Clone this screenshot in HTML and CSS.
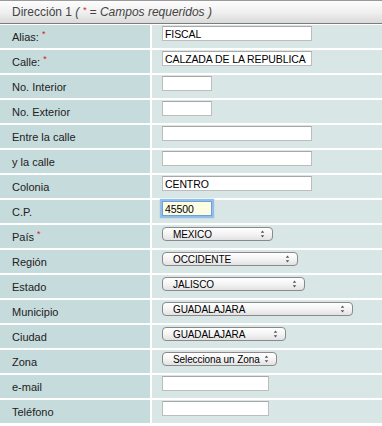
FILE: index.html
```html
<!DOCTYPE html>
<html lang="es">
<head>
    <meta charset="UTF-8">
    <meta name="viewport" content="width=device-width, initial-scale=1.0">
    <title>Dirección</title>
    <link rel="stylesheet" href="styles.css">
</head>
<body>

    <div class="box">
        <div class="box-head">Dirección 1 <em>( <span class="req">*</span> = Campos requeridos )</em></div>

        <div class="form">
            <div class="lbl">Alias: <span class="req">*</span></div>
            <div class="val"><input class="txt wide" type="text" value="FISCAL"></div>

            <div class="lbl">Calle: <span class="req">*</span></div>
            <div class="val"><input class="txt wide" type="text" value="CALZADA DE LA REPUBLICA"></div>

            <div class="lbl">No. Interior</div>
            <div class="val"><input class="txt short" type="text"></div>

            <div class="lbl">No. Exterior</div>
            <div class="val"><input class="txt short" type="text"></div>

            <div class="lbl">Entre la calle</div>
            <div class="val"><input class="txt wide" type="text"></div>

            <div class="lbl">y la calle</div>
            <div class="val"><input class="txt wide" type="text"></div>

            <div class="lbl">Colonia</div>
            <div class="val"><input class="txt wide" type="text" value="CENTRO"></div>

            <div class="lbl">C.P.</div>
            <div class="val"><input class="txt short focus" type="text" value="45500"></div>

            <div class="lbl">País <span class="req">*</span></div>
            <div class="val">
                <div class="sel" style="width: 111px;"><span>MEXICO</span><svg class="arr" viewBox="0 0 5 9"><path d="M2.5 0.5 L4.5 3 H0.5 Z M2.5 8.5 L4.5 6 H0.5 Z"/></svg></div>
            </div>

            <div class="lbl">Región</div>
            <div class="val">
                <div class="sel" style="width: 136px;"><span>OCCIDENTE</span><svg class="arr" viewBox="0 0 5 9"><path d="M2.5 0.5 L4.5 3 H0.5 Z M2.5 8.5 L4.5 6 H0.5 Z"/></svg></div>
            </div>

            <div class="lbl">Estado</div>
            <div class="val">
                <div class="sel" style="width: 143px;"><span>JALISCO</span><svg class="arr" viewBox="0 0 5 9"><path d="M2.5 0.5 L4.5 3 H0.5 Z M2.5 8.5 L4.5 6 H0.5 Z"/></svg></div>
            </div>

            <div class="lbl">Municipio</div>
            <div class="val">
                <div class="sel" style="width: 191px;"><span>GUADALAJARA</span><svg class="arr" viewBox="0 0 5 9"><path d="M2.5 0.5 L4.5 3 H0.5 Z M2.5 8.5 L4.5 6 H0.5 Z"/></svg></div>
            </div>

            <div class="lbl">Ciudad</div>
            <div class="val">
                <div class="sel" style="width: 124px;"><span>GUADALAJARA</span><svg class="arr" viewBox="0 0 5 9"><path d="M2.5 0.5 L4.5 3 H0.5 Z M2.5 8.5 L4.5 6 H0.5 Z"/></svg></div>
            </div>

            <div class="lbl">Zona</div>
            <div class="val">
                <div class="sel" style="width: 115px;"><span>Selecciona un Zona</span><svg class="arr" viewBox="0 0 5 9"><path d="M2.5 0.5 L4.5 3 H0.5 Z M2.5 8.5 L4.5 6 H0.5 Z"/></svg></div>
            </div>

            <div class="lbl">e-mail</div>
            <div class="val"><input class="txt mid" type="text"></div>

            <div class="lbl">Teléfono</div>
            <div class="val"><input class="txt mid" type="text"></div>
        </div>
    </div>

</body>
</html>
```

FILE: styles.css
```css
/* General Reset */
body {
    margin: 0;
    padding: 0;
    background-color: #fff;
    font-family: "Liberation Sans", Arial, Helvetica, sans-serif;
    color: #222;
}

.box {
    width: 382px;
}

/* Header */
.box-head {
    height: 22px;
    line-height: 22px;
    padding-left: 12px;
    font-size: 12px;
    color: #444;
    border-top: 1px solid #9a9a9a;
    border-bottom: 1px solid #7c7c7c;
    background: linear-gradient(to bottom, #fdfdfd 0%, #f0f0f0 50%, #dadada 100%);
}

.box-head em {
    font-style: italic;
}

.req {
    color: #e0121b;
    font-size: 9px;
    position: relative;
    top: -3px;
}

/* Form rows */
.form {
    display: grid;
    grid-template-columns: 150px 1fr;
    grid-auto-rows: 23px;
    column-gap: 2px;
    row-gap: 2px;
    margin-top: 1px;
}

.lbl {
    background-color: #c6dbdc;
    padding-left: 12px;
    font-size: 11px;
    display: flex;
    align-items: center;
    gap: 3px;
    padding-top: 1px;
}

.val {
    background-color: #d8e6e6;
    padding: 1px 0 0 10px;
    display: flex;
    align-items: flex-start;
}

/* Inputs */
.txt {
    box-sizing: border-box;
    height: 15px;
    margin: 0;
    padding: 0 2px;
    border: 1px solid #bdbdbd;
    border-top-color: #a8a8a8;
    background: #fff;
    font-family: "Liberation Sans", Arial, sans-serif;
    font-size: 10.5px;
    letter-spacing: -0.1px;
    color: #000;
    outline: none;
}

.wide { width: 150px; }
.short { width: 50px; }
.mid { width: 107px; }

.txt.focus {
    background: #fdfde4;
    border-color: #6e9fd6;
    box-shadow: 0 0 1px 2px #94bde9;
}

/* Select boxes */
.sel {
    box-sizing: border-box;
    height: 14px;
    margin-top: 1px;
    border: 1px solid #8a8a8a;
    border-radius: 4px;
    background: linear-gradient(to bottom, #ffffff 0%, #f4f4f4 50%, #e2e2e2 100%);
    display: flex;
    align-items: center;
    justify-content: space-between;
    padding: 0 7px 0 10px;
    font-family: "Liberation Sans", Arial, sans-serif;
    font-size: 10px;
    letter-spacing: -0.1px;
    color: #000;
}

.sel span {
    white-space: nowrap;
}

.arr {
    width: 5px;
    height: 8px;
    flex-shrink: 0;
    fill: #555;
}
```
